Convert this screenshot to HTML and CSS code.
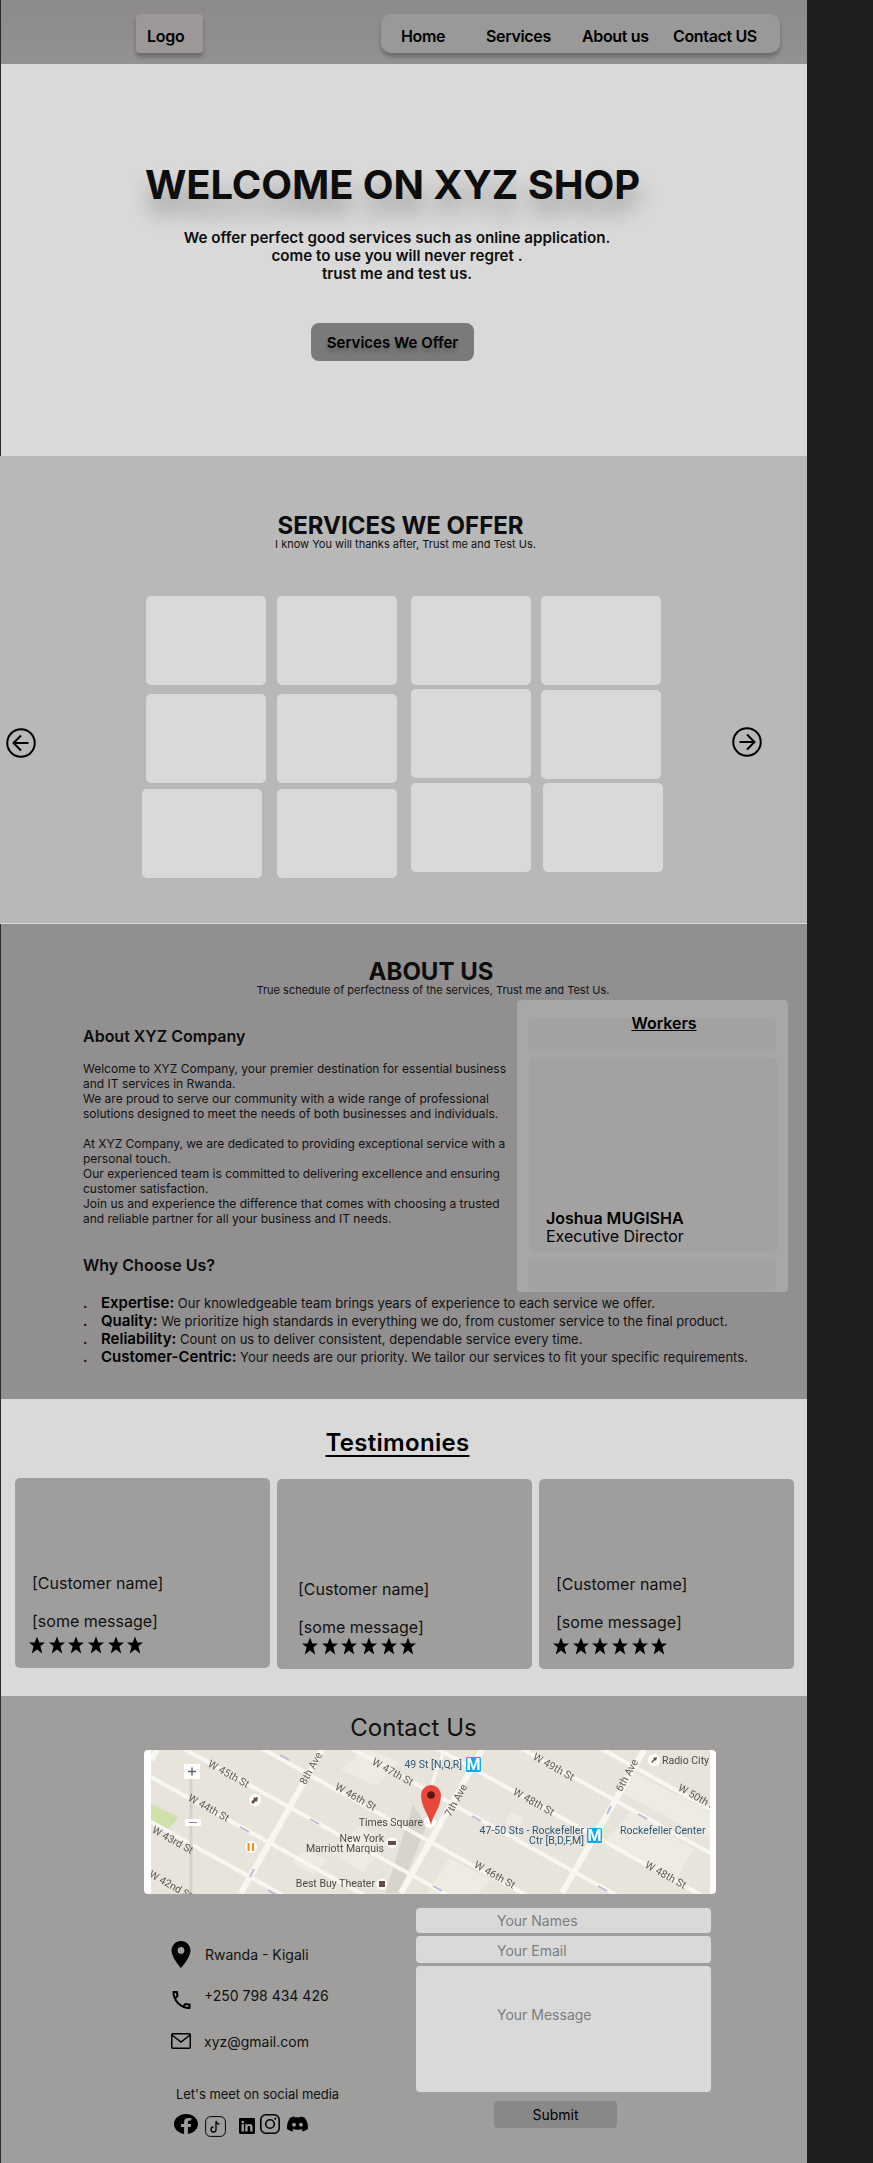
FILE: index.html
```html
<!DOCTYPE html>
<html lang="en">
<head>
    <meta charset="UTF-8">
    <meta name="viewport" content="width=device-width, initial-scale=1.0">
    <title>XYZ Shop</title>
    <link rel="stylesheet" href="styles.css">
</head>
<body>
    <svg class="sprites" width="0" height="0" aria-hidden="true">
        <symbol id="star" viewBox="0 0 16 17">
            <path d="M8 0l2.3 6h5.7l-4.6 3.8 1.8 7.2-5.2-4-5.2 4 1.8-7.2L0 6h5.7z"/>
        </symbol>
    </svg>

    <div class="page">
        <header class="topbar">
            <div class="logo">Logo</div>
            <nav class="nav">
                <a href="#home">Home</a>
                <a href="#services">Services</a>
                <a href="#about">About us</a>
                <a href="#contact">Contact US</a>
            </nav>
        </header>

        <section class="hero" id="home">
            <h1>WELCOME ON XYZ SHOP</h1>
            <p>We offer perfect good services such as online application.<br>come to use you will never regret .<br>trust me and test us.</p>
            <button class="hero-btn" type="button">Services We Offer</button>
        </section>

        <section class="services" id="services">
            <h2>SERVICES WE OFFER</h2>
            <p class="tagline">I know You will thanks after, Trust me and Test Us.</p>
            <div class="slider">
                <svg class="arrow arrow-left" viewBox="0 0 24 24" fill="none" stroke="#000" stroke-width="1.6">
                    <circle cx="12" cy="12" r="11"/>
                    <path d="M12 6l-6 6 6 6M6 12h12"/>
                </svg>
                <div class="tiles">
                    <div class="tile-col col-one">
                        <div class="tile"></div>
                        <div class="tile"></div>
                        <div class="tile tile-out"></div>
                    </div>
                    <div class="tile-col col-two">
                        <div class="tile"></div>
                        <div class="tile"></div>
                        <div class="tile"></div>
                    </div>
                    <div class="tile-col col-three">
                        <div class="tile"></div>
                        <div class="tile"></div>
                        <div class="tile"></div>
                    </div>
                    <div class="tile-col col-four">
                        <div class="tile"></div>
                        <div class="tile"></div>
                        <div class="tile tile-in"></div>
                    </div>
                </div>
                <svg class="arrow arrow-right" viewBox="0 0 24 24" fill="none" stroke="#000" stroke-width="1.6">
                    <circle cx="12" cy="12" r="11"/>
                    <path d="M12 6l6 6-6 6M6 12h12"/>
                </svg>
            </div>
        </section>

        <section class="about" id="about">
            <h2>ABOUT US</h2>
            <p class="tagline">True schedule of perfectness of the services, Trust me and Test Us.</p>
            <div class="about-row">
                <div class="about-text">
                    <h3 class="about-head">About XYZ Company</h3>
                    <p>Welcome to XYZ Company, your premier destination for essential business and IT services in Rwanda.<br>
                    We are proud to serve our community with a wide range of professional solutions designed to meet the needs of both businesses and individuals.<br><br>
                    At XYZ Company, we are dedicated to providing exceptional service with a personal touch.<br>
                    Our experienced team is committed to delivering excellence and ensuring customer satisfaction.<br>
                    Join us and experience the difference that comes with choosing a trusted and reliable partner for all your business and IT needs.</p>
                    <h3 class="why-head">Why Choose Us?</h3>
                </div>
                <aside class="workers">
                    <div class="worker-slot worker-title"><span>Workers</span></div>
                    <div class="worker-card">
                        <strong>Joshua MUGISHA</strong>
                        <span>Executive Director</span>
                    </div>
                    <div class="worker-slot"></div>
                </aside>
            </div>
            <ul class="why-list">
                <li><strong>Expertise:</strong> Our knowledgeable team brings years of experience to each service we offer.</li>
                <li><strong>Quality:</strong> We prioritize high standards in everything we do, from customer service to the final product.</li>
                <li><strong>Reliability:</strong> Count on us to deliver consistent, dependable service every time.</li>
                <li><strong>Customer-Centric:</strong> Your needs are our priority. We tailor our services to fit your specific requirements.</li>
            </ul>
        </section>

        <section class="testimonies">
            <h2>Testimonies</h2>
            <div class="cards">
                <article class="card">
                    <p class="card-name">[Customer name]</p>
                    <p class="card-msg">[some message]</p>
                    <div class="stars">
                        <svg><use href="#star"/></svg><svg><use href="#star"/></svg><svg><use href="#star"/></svg><svg><use href="#star"/></svg><svg><use href="#star"/></svg><svg><use href="#star"/></svg>
                    </div>
                </article>
                <article class="card card-mid">
                    <p class="card-name">[Customer name]</p>
                    <p class="card-msg">[some message]</p>
                    <div class="stars">
                        <svg><use href="#star"/></svg><svg><use href="#star"/></svg><svg><use href="#star"/></svg><svg><use href="#star"/></svg><svg><use href="#star"/></svg><svg><use href="#star"/></svg>
                    </div>
                </article>
                <article class="card card-last">
                    <p class="card-name">[Customer name]</p>
                    <p class="card-msg">[some message]</p>
                    <div class="stars">
                        <svg><use href="#star"/></svg><svg><use href="#star"/></svg><svg><use href="#star"/></svg><svg><use href="#star"/></svg><svg><use href="#star"/></svg><svg><use href="#star"/></svg>
                    </div>
                </article>
            </div>
        </section>

        <section class="contact" id="contact">
            <h2>Contact Us</h2>
            <div class="map">
                <svg viewBox="0 0 559 144" width="559" height="144">
                    <rect width="559" height="144" fill="#e8e4dc"/>
                    <path d="M0 54L28 67 17 79 0 70z" fill="#cfe0a8"/>
                    <g fill="#eeebe4">
                        <path d="M190 20l25-22 32 14-22 24z"/>
                        <path d="M140 112l16-12 20 10-14 14z"/>
                        <path d="M180 102l28-26 30 16-26 30z"/>
                        <path d="M298 108l42 22-14 14h-50z"/>
                        <path d="M480 62l63 37-18 31-70-40z"/>
                        <path d="M483 23l76 39v28l-94-50z"/>
                        <path d="M360 62l14 6-8 12-12-6z"/>
                    </g>
                    <path d="M262 55l14 20-28 68h-14z" fill="#d8d4cc"/>
                    <g stroke="#f8f6f1" stroke-width="4" fill="none">
                        <path d="M0 72L559 382M0 27L559 337M0-19.5L559 290.5M0-63L559 247M0-113L559 197M0-160L559 150M0-207L559 103M0-251L559 59"/>
                        <path d="M292 3L280 37" stroke-width="3"/>
                        <path d="M0 10L6 0M90 143L171 0M250 143L331 0M411 143L493 0" stroke-width="6"/>
                    </g>
                    <path d="M129 5l9 5M159 69l9 5M89 77l9 5M321 66l9 5M487 64l9 5M447 136l9 5M282 136l9 5M117 140l9 5M99 127l4-8M456 64l4-8" stroke="#b7bdd2" stroke-width="2"/>
                    <path d="M40 29V144" stroke="#d5d2cc" stroke-width="3"/>
                    <rect x="33" y="14" width="16" height="15" fill="#fff"/>
                    <path d="M37 21.500h8M41 17.500v8" stroke="#666" stroke-width="1.500"/>
                    <rect x="34" y="69" width="16" height="7" rx="1" fill="#fff"/>
                    <path d="M38 72.500h8" stroke="#888"/>

                    <g class="map-road">
                        <text transform="translate(76 27) rotate(29)" text-anchor="middle">W 45th St</text>
                        <text transform="translate(56 61) rotate(29)" text-anchor="middle">W 44th St</text>
                        <text transform="translate(20 93) rotate(29)" text-anchor="middle">W 43rd St</text>
                        <text transform="translate(18 138) rotate(29)" text-anchor="middle">W 42nd St</text>
                        <text transform="translate(163 20) rotate(-61)" text-anchor="middle">8th Ave</text>
                        <text transform="translate(203 50) rotate(29)" text-anchor="middle">W 46th St</text>
                        <text transform="translate(240 25) rotate(29)" text-anchor="middle">W 47th St</text>
                        <text transform="translate(308 52) rotate(-61)" text-anchor="middle">7th Ave</text>
                        <text transform="translate(401 20) rotate(29)" text-anchor="middle">W 49th St</text>
                        <text transform="translate(381 55) rotate(29)" text-anchor="middle">W 48th St</text>
                        <text transform="translate(342 128) rotate(29)" text-anchor="middle">W 46th St</text>
                        <text transform="translate(513 128) rotate(29)" text-anchor="middle">W 48th St</text>
                        <text transform="translate(479 27) rotate(-61)" text-anchor="middle">6th Ave</text>
                        <text transform="translate(546 51) rotate(29)" text-anchor="middle">W 50th St</text>
                    </g>
                    <g class="map-place" text-anchor="end">
                        <text x="272" y="76">Times Square</text>
                        <text x="233" y="92">New York</text>
                        <text x="233" y="102">Marriott Marquis</text>
                        <text x="224" y="137">Best Buy Theater</text>
                    </g>
                    <text class="map-place" x="511" y="14">Radio City</text>
                    <g class="map-transit" text-anchor="end">
                        <text x="311" y="18">49 St [N,Q,R]</text>
                        <text x="433" y="84">47-50 Sts - Rockefeller</text>
                        <text x="433" y="94">Ctr [B,D,F,M]</text>
                    </g>
                    <text class="map-transit" x="469" y="84">Rockefeller Center</text>

                    <rect x="315" y="7" width="15" height="15" rx="1.500" fill="#0aa9f2"/>
                    <text class="map-metro" x="322.500" y="20" text-anchor="middle">M</text>
                    <rect x="436" y="78" width="15" height="15" rx="1.500" fill="#0aa9f2"/>
                    <text class="map-metro" x="443.500" y="91" text-anchor="middle">M</text>

                    <g fill="#fff">
                        <circle cx="104" cy="50" r="6"/>
                        <circle cx="100" cy="97" r="6"/>
                        <circle cx="241" cy="93" r="5.500"/>
                        <circle cx="231" cy="134" r="5.500"/>
                        <circle cx="279" cy="72" r="6"/>
                        <circle cx="503" cy="10" r="6"/>
                    </g>
                    <path d="M100 52l3-3-1-1 5-1-1 5-1-1-3 3z" fill="#6b4a42"/>
                    <path d="M97.500 93v8M102 93v8" stroke="#f58a1f" stroke-width="2"/>
                    <path d="M237 91h8v4h-8z" fill="#6b4a42"/>
                    <rect x="228" y="131" width="6" height="6" fill="#6b4a42"/>
                    <path d="M500 12l3-3-1-1 4-1-1 4-1-1-3 3z" fill="#6b4a42"/>

                    <path d="M280 75c-2-10-10-18-10-30a10 10 0 0 1 20 0c0 12-8 20-10 30z" fill="#e8483c"/>
                    <circle cx="280" cy="45" r="3.800" fill="#5a1512"/>
                </svg>
            </div>
            <div class="contact-row">
                <div class="contact-info">
                    <div class="info-line info-place">
                        <svg class="icon-pin" viewBox="5 2 14 20"><path d="M12 2C8.130 2 5 5.130 5 9c0 5.250 7 13 7 13s7-7.750 7-13c0-3.870-3.130-7-7-7zm0 9.500a2.500 2.500 0 0 1 0-5 2.500 2.500 0 0 1 0 5z"/></svg>
                        <span>Rwanda - Kigali</span>
                    </div>
                    <div class="info-line info-phone">
                        <svg class="icon-phone" viewBox="3 3 18 18"><path d="M6.540 5c.06.89.21 1.760.45 2.590l-1.200 1.200c-.41-1.200-.67-2.470-.76-3.790h1.510m9.860 12.020c.85.24 1.720.39 2.600.45v1.490c-1.320-.09-2.590-.35-3.800-.75l1.200-1.190M7.500 3H4c-.55 0-1 .45-1 1 0 9.390 7.610 17 17 17 .55 0 1-.45 1-1v-3.490c0-.55-.45-1-1-1-1.240 0-2.450-.2-3.570-.57-.1-.04-.21-.05-.31-.05-.26 0-.51.1-.71.29l-2.200 2.200c-2.830-1.450-5.150-3.760-6.590-6.590l2.200-2.200c.28-.28.36-.67.25-1.020C8.700 6.450 8.500 5.250 8.500 4c0-.55-.45-1-1-1z"/></svg>
                        <span>+250 798 434 426</span>
                    </div>
                    <div class="info-line info-mail">
                        <svg class="icon-mail" viewBox="0 0 20 16" fill="none" stroke="#000" stroke-width="1.500">
                            <rect x=".75" y=".75" width="18.500" height="14.500" rx="1"/>
                            <path d="M1 2l9 7 9-7"/>
                        </svg>
                        <span>xyz@gmail.com</span>
                    </div>
                    <p class="social-head">Let's meet on social media</p>
                    <div class="socials">
                        <svg class="soc-fb" viewBox="0 0 16 16" preserveAspectRatio="none"><path d="M16 8.049c0-4.446-3.582-8.050-8-8.050C3.580 0-.002 3.603-.002 8.050c0 4.017 2.926 7.347 6.750 7.951v-5.625h-2.030V8.050H6.750V6.275c0-2.017 1.195-3.131 3.022-3.131.876 0 1.791.157 1.791.157v1.980h-1.009c-.993 0-1.303.621-1.303 1.258v1.510h2.218l-.354 2.326H9.250V16c3.824-.604 6.750-3.934 6.750-7.951"/></svg>
                        <svg class="soc-tt" viewBox="0 0 21 21" fill="none" stroke="#000">
                            <rect x=".6" y=".6" width="19.800" height="19.800" rx="5"/>
                            <path d="M11 5v8.500a2.500 2.500 0 1 1-2.500-2.500M11 5c.4 1.800 1.800 3 3.500 3.200" stroke-width="1.300"/>
                        </svg>
                        <svg class="soc-in" viewBox="0 0 16 16"><path fill-rule="evenodd" d="M0 1.146C0 .513.526 0 1.175 0h13.650C15.474 0 16 .513 16 1.146v13.708c0 .633-.526 1.146-1.175 1.146H1.175C.526 16 0 15.487 0 14.854zm4.943 12.248V6.169H2.542v7.225zm-1.200-8.212c.837 0 1.358-.554 1.358-1.248-.015-.709-.52-1.248-1.342-1.248S2.400 3.226 2.400 3.934c0 .694.521 1.248 1.327 1.248zm4.908 8.212V9.359c0-.216.016-.432.08-.586.173-.431.568-.878 1.232-.878.869 0 1.216.662 1.216 1.634v3.865h2.401V9.250c0-2.220-1.184-3.252-2.764-3.252-1.274 0-1.845.7-2.165 1.193v.025h-.016l.016-.025V6.169h-2.400c.03.678 0 7.225 0 7.225z"/></svg>
                        <svg class="soc-ig" viewBox="0 0 20 20" fill="none" stroke="#000" stroke-width="1.600">
                            <rect x=".8" y=".8" width="18.400" height="18.400" rx="5"/>
                            <circle cx="10" cy="10" r="4.300"/>
                            <circle cx="15.300" cy="4.700" r=".7" fill="#000" stroke-width=".8"/>
                        </svg>
                        <svg class="soc-dc" viewBox="0 0 16 13" preserveAspectRatio="none"><path transform="translate(0 -1.500)" d="M13.545 2.907a13.200 13.200 0 0 0-3.257-1.011.05.05 0 0 0-.052.025c-.141.25-.297.577-.406.833a12.200 12.200 0 0 0-3.658 0 8 8 0 0 0-.412-.833.05.05 0 0 0-.052-.025c-1.125.194-2.220.534-3.257 1.011a.04.04 0 0 0-.021.018C.356 6.024-.213 9.047.066 12.032q.003.022.021.037a13.300 13.300 0 0 0 3.995 2.020.05.05 0 0 0 .056-.019q.463-.63.818-1.329a.05.05 0 0 0-.01-.059l-.018-.011a9 9 0 0 1-1.248-.595.05.05 0 0 1-.02-.066l.015-.019q.127-.095.248-.195a.05.05 0 0 1 .051-.007c2.619 1.196 5.454 1.196 8.041 0a.05.05 0 0 1 .053.007q.121.1.248.195a.05.05 0 0 1-.004.085 8 8 0 0 1-1.249.594.05.05 0 0 0-.03.03.05.05 0 0 0 .003.041c.24.465.515.909.817 1.329a.05.05 0 0 0 .056.019 13.200 13.200 0 0 0 4.001-2.020.05.05 0 0 0 .021-.037c.334-3.451-.559-6.449-2.366-9.106a.03.03 0 0 0-.02-.019m-8.198 7.307c-.789 0-1.438-.724-1.438-1.612s.637-1.613 1.438-1.613c.807 0 1.450.73 1.438 1.613 0 .888-.637 1.612-1.438 1.612m5.316 0c-.788 0-1.438-.724-1.438-1.612s.637-1.613 1.438-1.613c.807 0 1.451.73 1.438 1.613 0 .888-.631 1.612-1.438 1.612"/></svg>
                    </div>
                </div>
                <form class="contact-form">
                    <input class="field field-name" type="text" placeholder="Your Names">
                    <input class="field field-mail" type="email" placeholder="Your Email">
                    <textarea class="field field-msg" placeholder="Your Message"></textarea>
                    <button class="submit" type="submit">Submit</button>
                </form>
            </div>
        </section>
    </div>
</body>
</html>
```

FILE: styles.css
```css
* {
    box-sizing: border-box;
}
body {
    margin: 0;
    background-color: #1e1e1e;
    font-family: Inter, "Liberation Sans", sans-serif;
    color: #000;
}
h1, h2, h3, p, ul {
    margin: 0;
    padding: 0;
}
.sprites {
    position: absolute;
}
.page {
    width: 807px;
}

/* Header */
.topbar {
    height: 64px;
    padding: 14px 27px 0 135px;
    display: flex;
    justify-content: space-between;
    align-items: flex-start;
    background: linear-gradient(#8c8a8b, #939191);
    border-left: 1px solid #2b2b2b;
}
.logo {
    width: 67px;
    height: 39px;
    padding: 14px 0 0 11px;
    background-color: #9b9897;
    border-radius: 4px;
    box-shadow: 0 4px 4px rgba(0, 0, 0, 0.25);
    font-size: 16px;
    font-weight: 600;
    line-height: 17px;
    letter-spacing: -0.3px;
}
.nav {
    width: 399px;
    height: 39px;
    padding: 14px 0 0 20px;
    display: grid;
    grid-template-columns: 85px 96px 91px auto;
    background-color: #9a9999;
    border-radius: 10px;
    box-shadow: 0 4px 4px rgba(0, 0, 0, 0.25);
    font-size: 16px;
    font-weight: 600;
    line-height: 17px;
    letter-spacing: -0.35px;
}
.nav a {
    color: #000;
    text-decoration: none;
    white-space: nowrap;
}

/* Hero */
.hero {
    height: 392px;
    padding: 97px 23px 0 0;
    display: flex;
    flex-direction: column;
    align-items: center;
    background-color: #d9d9d9;
    border-left: 1px solid #2b2b2b;
}
.hero h1 {
    font-size: 40px;
    font-weight: 700;
    line-height: 48px;
    white-space: nowrap;
    letter-spacing: -0.1px;
    color: #0d0d0d;
    text-shadow: 0 16px 20px rgba(0, 0, 0, 0.28);
}
.hero p {
    margin: 20px 0 0 9px;
    font-size: 15.200px;
    font-weight: 600;
    line-height: 18px;
    text-align: center;
    color: #0d0d0d;
}
.hero-btn {
    width: 163px;
    height: 38px;
    margin-top: 40px;
    border: none;
    border-radius: 8px;
    background-color: #7a7a7a;
    font-family: inherit;
    font-size: 15px;
    font-weight: 600;
    color: #000;
    text-shadow: 0 4px 4px rgba(0, 0, 0, 0.25);
}

/* Services */
.services {
    height: 468px;
    padding-top: 58px;
    background-color: #b8b8b8;
    border-bottom: 1px solid #d9d9d9;
    text-align: center;
}
.services h2, .about h2 {
    margin-bottom: -1px;
    font-size: 24px;
    font-weight: 700;
    line-height: 24px;
    color: #0d0d0d;
}
.tagline {
    font-size: 11px;
    line-height: 14px;
    color: #111;
}
.services h2 {
    padding-right: 6px;
}
.services .tagline {
    padding-left: 4px;
}
.slider {
    margin-top: 45px;
    display: flex;
    align-items: center;
}
.arrow {
    width: 30px;
    height: 30px;
    flex: none;
}
.arrow-left {
    margin: 12px 0 0 6px;
}
.arrow-right {
    margin: 10px 0 0 71px;
}
.tiles {
    margin-left: 110px;
    display: flex;
}
.tile-col {
    width: 120px;
    display: flex;
    flex-direction: column;
}
.tile {
    width: 120px;
    height: 89px;
    background-color: #d9d9d9;
    border-radius: 5px;
}
.col-one .tile:nth-child(2), .col-two .tile:nth-child(2) {
    margin-top: 9px;
}
.col-one .tile:nth-child(3), .col-two .tile:nth-child(3) {
    margin-top: 6px;
}
.col-two {
    margin-left: 11px;
}
.col-three {
    margin-left: 14px;
}
.col-three .tile:nth-child(2) {
    margin-top: 4px;
}
.col-three .tile:nth-child(3) {
    margin-top: 5px;
}
.col-four {
    margin-left: 10px;
}
.col-four .tile:nth-child(2) {
    margin-top: 5px;
}
.col-four .tile:nth-child(3) {
    margin-top: 4px;
}
.tile-out {
    margin-left: -4px;
}
.tile-in {
    margin-left: 2px;
}

/* About */
.about {
    height: 475px;
    padding-top: 36px;
    background-color: #918f8f;
    border-left: 1px solid #2b2b2b;
}
.about h2 {
    padding-left: 54px;
    text-align: center;
}
.about .tagline {
    padding-left: 58px;
    text-align: center;
}
.about-row {
    margin-top: 3px;
    height: 292px;
    display: flex;
    justify-content: space-between;
}
.about-text {
    width: 430px;
    margin-left: 82px;
}
.about-text p {
    margin-top: 15px;
    font-size: 12px;
    line-height: 15px;
    color: #111;
}
.about-head, .why-head {
    font-size: 16px;
    font-weight: 600;
    line-height: 20px;
    color: #0d0d0d;
}
.about-head {
    margin-top: 26px;
}
.why-head {
    margin-top: 29px;
}
.workers {
    width: 271px;
    height: 292px;
    margin-right: 19px;
    padding: 18px 0 0 11px;
    overflow: hidden;
    background-color: #a8a6a6;
    border-radius: 4px;
}
.worker-slot {
    width: 248px;
    height: 33px;
    background-color: #a3a2a0;
    border-radius: 5px;
}
.worker-title {
    margin-bottom: 6px;
    padding-left: 24px;
    text-align: center;
}
.worker-title span {
    position: relative;
    top: -5px;
    font-size: 16px;
    font-weight: 600;
    line-height: 19px;
    text-decoration: underline;
}
.worker-card {
    width: 248px;
    height: 195px;
    margin: 0 0 7px 1px;
    padding: 0 0 7px 17px;
    display: flex;
    flex-direction: column;
    justify-content: flex-end;
    background-color: #a3a2a0;
    border-radius: 5px;
    font-size: 16px;
    line-height: 18px;
}
.worker-card strong {
    font-weight: 600;
}
.why-list {
    margin: 2px 0 0 82px;
    list-style: none;
    font-size: 13px;
    line-height: 18px;
    color: #111;
}
.why-list li::before {
    content: ".";
    display: inline-block;
    width: 18px;
    font-weight: 700;
}
.why-list strong {
    font-size: 15px;
    font-weight: 600;
    color: #000;
}

/* Testimonies */
.testimonies {
    height: 297px;
    padding-top: 29px;
    background-color: #d9d9d9;
    border-left: 1px solid #2b2b2b;
}
.testimonies h2 {
    padding-right: 13px;
    font-size: 24px;
    font-weight: 600;
    line-height: 29px;
    letter-spacing: 0.3px;
    text-align: center;
    text-decoration: underline;
    text-decoration-thickness: 2px;
    text-underline-offset: 4px;
}
.cards {
    margin: 21px 0 0 14px;
    display: flex;
    gap: 7px;
    align-items: flex-start;
}
.card {
    width: 255px;
    height: 190px;
    padding: 0 0 14px 17px;
    display: flex;
    flex-direction: column;
    justify-content: flex-end;
    background-color: #9f9e9c;
    border-radius: 5px;
    font-size: 16px;
    line-height: 19px;
    color: #111;
}
.card-msg {
    margin: 19px 0 5px;
}
.stars {
    height: 18px;
    margin-left: -3px;
    display: flex;
    gap: 3.7px;
}
.stars svg {
    width: 16px;
    height: 18px;
    fill: #000;
}
.card-mid, .card-last {
    margin-top: 1px;
}
.card-mid {
    padding-left: 21px;
}
.card-mid .card-msg {
    margin-bottom: 0;
}
.card-mid .stars {
    margin-left: 4px;
}

/* Contact */
.contact {
    height: 467px;
    padding-top: 17px;
    background-color: #9f9e9c;
    border-left: 1px solid #2b2b2b;
}
.contact h2 {
    padding-left: 19px;
    font-size: 24px;
    font-weight: 400;
    line-height: 29px;
    text-align: center;
    color: #111;
}
.map {
    width: 572px;
    height: 144px;
    margin: 8px 0 0 143px;
    padding-left: 7px;
    background-color: #fff;
    border-radius: 4px;
    overflow: hidden;
}
.map svg {
    display: block;
    filter: blur(0.4px);
}
.map text {
    font-family: Roboto, sans-serif;
    font-size: 10.500px;
}
.map-road {
    fill: #5f5a54;
}
.map-place {
    fill: #4f4a46;
}
.map-transit {
    fill: #2c5a7c;
}
.map .map-metro {
    fill: #fff;
    font-size: 16px;
    font-weight: 700;
}
.contact-row {
    margin-top: 14px;
    display: flex;
}
.contact-info {
    width: 246px;
    margin: 33px 0 0 169px;
    font-size: 14px;
    color: #111;
}
.info-line {
    display: flex;
    align-items: flex-start;
    line-height: 17px;
}
.info-line svg {
    flex: none;
}
.icon-pin {
    width: 22px;
    height: 27px;
    margin-right: 13px;
}
.info-place span {
    margin-top: 5px;
}
.info-phone {
    margin-top: 23px;
    padding-left: 2px;
}
.icon-phone {
    width: 19px;
    height: 18px;
    margin-right: 13px;
}
.info-phone span {
    margin-top: -4px;
}
.info-mail {
    margin-top: 24px;
    padding-left: 1px;
}
.icon-mail {
    width: 20px;
    height: 16px;
    margin-right: 13px;
}
.social-head {
    margin: 36px 0 0 6px;
    font-size: 13px;
    line-height: 16px;
    letter-spacing: -0.03px;
    white-space: nowrap;
}
.socials {
    margin: 12px 0 0 4px;
    display: flex;
    align-items: flex-start;
}
.soc-fb {
    width: 24px;
    height: 20px;
}
.soc-tt {
    width: 21px;
    height: 21px;
    margin: 2px 0 0 7px;
}
.soc-in {
    width: 16px;
    height: 16px;
    margin: 4px 0 0 13px;
}
.soc-ig {
    width: 20px;
    height: 20px;
    margin-left: 5px;
}
.soc-dc {
    width: 21px;
    height: 16px;
    margin: 2px 0 0 7px;
}
.contact-form {
    width: 295px;
    display: flex;
    flex-direction: column;
}
.field {
    width: 100%;
    padding: 0 0 0 81px;
    border: none;
    border-radius: 4px;
    background-color: #d9d9d9;
    font-family: inherit;
    font-size: 14px;
    line-height: 17px;
    color: #000;
    resize: none;
    display: block;
}
.field::placeholder {
    color: #7d7d7d;
    opacity: 1;
}
.field-name {
    height: 25px;
}
.field-mail {
    height: 27px;
    margin-top: 3px;
    padding-top: 2px;
}
.field-msg {
    height: 126px;
    margin-top: 3px;
    padding-top: 40px;
}
.submit {
    width: 123px;
    height: 27px;
    margin: 9px 0 0 78px;
    padding-left: 6px;
    border: none;
    border-radius: 4px;
    background-color: #898787;
    font-family: inherit;
    font-size: 14px;
    color: #000;
}
```
